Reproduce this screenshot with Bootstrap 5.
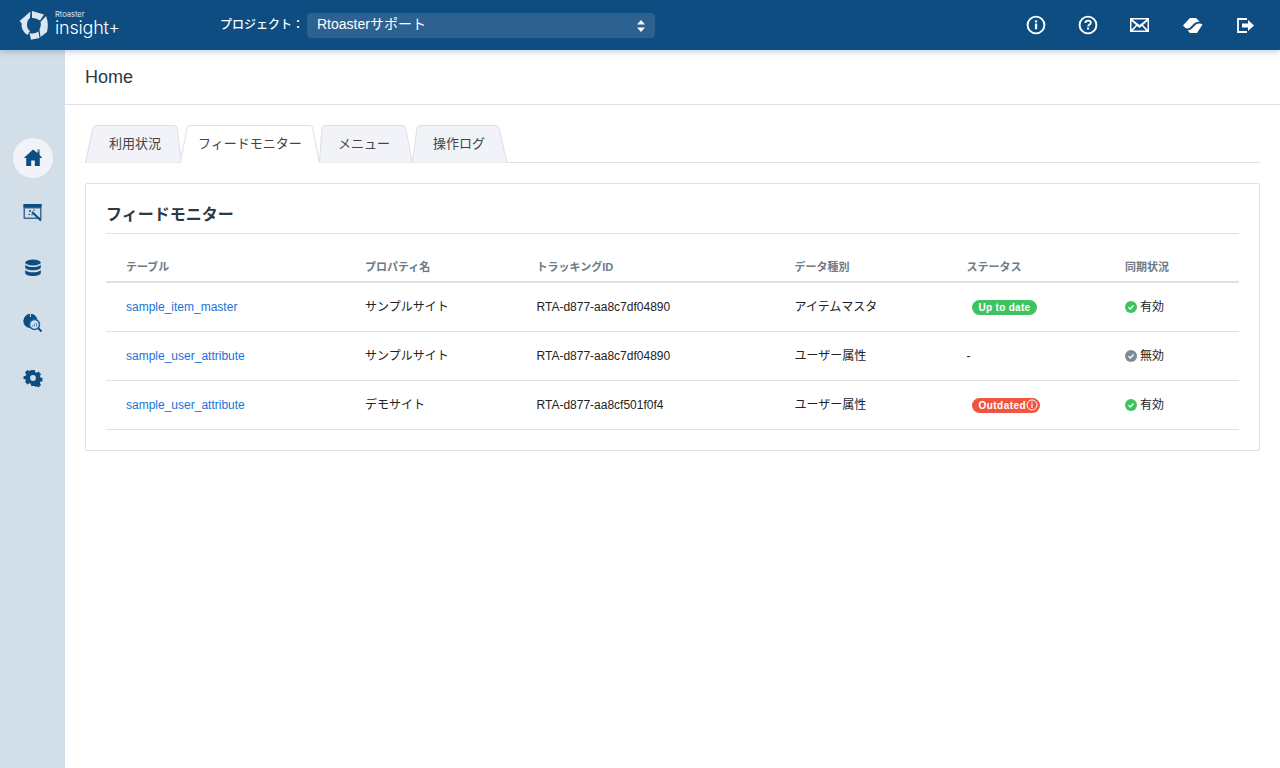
<!DOCTYPE html>
<html lang="ja">
<head>
<meta charset="utf-8">
<title>Home</title>
<link href="https://cdn.jsdelivr.net/npm/bootstrap@5.3.0/dist/css/bootstrap.min.css" rel="stylesheet">
<style>
html,body{height:100%}
body{font-family:"Liberation Sans","Noto Sans CJK JP",sans-serif;color:#222;background:#fff;overflow:hidden;font-size:12px}
.app-top{height:50px;background:#0e4d82;box-shadow:0 2px 6px rgba(14,77,130,.25);position:relative;z-index:5;padding:0}
.brand-box{width:220px;padding-left:19px;gap:6px;color:#fff;flex:none}
.brand-words{padding-bottom:4px}
.brand-small{font-family:"Inter",sans-serif;font-size:7.5px;line-height:8px;display:block;color:#dfe8f0}
.brand-big{font-family:"Inter",sans-serif;font-weight:300;font-size:18px;line-height:14px;letter-spacing:-.2px;display:block;color:#fff;margin-top:2px}
.proj-label{font-size:12px;font-weight:500;color:#fff;width:82px;letter-spacing:0;white-space:nowrap;margin-right:5px;flex:none}
.proj-select{width:348px;height:25px;background:#2c6190;border-radius:4px;color:#fff;font-size:14px;padding:0 10px 2px;position:relative;flex:none}
.proj-arrows{position:absolute;right:9px;top:7px}
.top-icons{margin-left:auto;gap:30px;padding-right:24px}
.top-icons a{display:block;width:22px;height:22px;color:#fff}
.side-rail{width:65px;background:#d2dee8;padding-top:88px;gap:15px;flex:none}
.rail-btn{width:40px;height:40px;border-radius:50%;color:#0e4d82}
.rail-on{background:#f1f3f8}
.page-main{flex:1;min-width:0}
.home-head{height:55px;padding:0 20px;border-bottom:1px solid #dfe1e4;font-size:18px;color:#2b3a44}
.work-area{padding:20px 20px 0}
.tab-row{height:38px;border-bottom:1px solid #dee0e3;margin:0;padding:0;list-style:none}
.tab-item{position:relative;height:38px;font-size:13px;color:#444;display:flex;align-items:center;white-space:nowrap;padding-bottom:1px}
.tab-item svg{position:absolute;left:0;top:0;overflow:visible}
.tab-item span{position:relative}
.tab-a{width:96px;padding-left:24px}
.tab-b{width:138px;padding-left:17px;z-index:2}
.tab-c{width:93px;padding-left:19px}
.tab-d{width:95px;padding-left:21px}
.feed-card{margin-top:20px;border:1px solid #dfe1e4;border-radius:2px;padding:20px 20px 20px;height:268px}
.feed-title{font-size:16px;font-weight:700;color:#2b3a44;height:30px;margin:0;line-height:21px;border-bottom:1px solid #dfe1e4}
.feed-table{table-layout:fixed;width:100%;margin:0;font-size:12px;--bs-table-color:#222}
.feed-table th{font-size:11px;font-weight:700;color:#6e7a84;height:48px;padding:0 0 6px 20px;vertical-align:bottom;border-bottom:2px solid #dfe1e4;line-height:16px}
.feed-table td{height:49px;padding:0 0 0 20px;vertical-align:middle;border-bottom:1px solid #dfe1e4;color:#222;line-height:16px}
.feed-table a{color:#1a73d9;text-decoration:none}
.state-pill{display:inline-flex;align-items:center;height:15px;border-radius:8px;font-size:10px;font-weight:700;color:#fff;padding:0 7px;margin-left:5px;line-height:15px;letter-spacing:.3px}
.pill-ok{background:#3fc35f}
.pill-old{background:#f0563f;padding-right:2px;letter-spacing:.45px}
.sync-cell{display:flex;align-items:center;gap:3px}
</style>
</head>
<body>
<nav class="navbar app-top d-flex flex-nowrap justify-content-start align-items-center">
  <div class="brand-box d-flex align-items-center">
    <svg width="30" height="30" viewBox="0 0 30 30" aria-hidden="true"><g fill="#dbe6f0"><path d="M.5 11 11.500 1.500 11 8Q8 10 8 14.500 8 19 11 21L8.500 25Q2 21 2.500 13z"/><path d="M13 1 25 4.500 21 10.500Q17 7.500 13 8z"/><path d="M27 6Q30 13 28 22L21.500 27 20.500 19.500Q22.500 15 21.500 12z"/><path d="M10.500 23Q15 24.500 19.500 21.500L20.500 28 12 29.800z"/></g></svg>
    <div class="brand-words"><span class="brand-small">Rtoaster</span><span class="brand-big">insight+</span></div>
  </div>
  <div class="proj-label">プロジェクト：</div>
  <div class="proj-select d-flex align-items-center">Rtoasterサポート
    <svg class="proj-arrows" width="10" height="12" viewBox="0 0 10 12"><path d="M5 0l4 4.500H1zM5 12l4-4.500H1z" fill="#fff"/></svg>
  </div>
  <div class="top-icons d-flex align-items-center">
    <a href="#" aria-label="info"><svg width="22" height="22" viewBox="0 0 22 22"><circle cx="10" cy="11" r="8.400" fill="none" stroke="#fff" stroke-width="1.900"/><rect x="8.900" y="9.600" width="2.300" height="5.600" fill="#fff"/><rect x="8.900" y="6.400" width="2.300" height="2.100" fill="#fff"/></svg></a>
    <a href="#" aria-label="help"><svg width="22" height="22" viewBox="0 0 22 22"><circle cx="10" cy="11" r="8.400" fill="none" stroke="#fff" stroke-width="1.900"/><path d="M7.300 9c.1-1.600 1.200-2.400 2.800-2.400 1.600 0 2.700.9 2.700 2.200 0 2-2.600 1.900-2.700 3.600" fill="none" stroke="#fff" stroke-width="1.800"/><rect x="9" y="13.500" width="2.100" height="2" fill="#fff"/></svg></a>
    <a href="#" aria-label="mail"><svg width="22" height="22" viewBox="0 0 22 22"><rect x="0" y="4" width="19" height="14" fill="#fff"/><path d="M2.500 5.500H16.500L9.500 11zM1.500 7 6 11 1.500 15.500zM17.500 7 13 11 17.500 15.500zM3 16.500 7 12 9.500 14 12 12 16 16.500z" fill="#0e4d82"/></svg></a>
    <a href="#" aria-label="transfer"><svg width="22" height="22" viewBox="0 0 22 22"><path d="M1 11.500 8 4H14L20.500 10.500 15 19H8z" fill="#fff"/><path d="M21.500 9.500Q16.500 7.500 13 10L8.500 14.500Q6 16.500 1.500 14" fill="none" stroke="#0e4d82" stroke-width="2"/></svg></a>
    <a href="#" aria-label="logout"><svg width="22" height="22" viewBox="0 0 22 22"><path d="M13 5H4v13h9" fill="none" stroke="#fff" stroke-width="1.800"/><path d="M8 9.500h6V6l6 5.500-6 5.500v-3.500H8z" fill="#fff"/></svg></a>
  </div>
</nav>
<div class="d-flex" style="height:718px">
  <aside class="side-rail d-flex flex-column align-items-center">
    <a href="#" class="rail-btn rail-on d-flex align-items-center justify-content-center" aria-label="home"><svg width="20" height="20" viewBox="0 0 20 20"><path d="M10 1.500.8 10h2.400v8h5v-5.500h3.600V18h5v-8h2.400L16.500 6.800V3h-2v2z" fill="#0e4d82"/><circle cx="15.500" cy="2.500" r="1.400" fill="#6f9cc4"/></svg></a>
    <a href="#" class="rail-btn d-flex align-items-center justify-content-center" aria-label="tag"><svg width="20" height="20" viewBox="0 0 20 20"><rect x="0.500" y="1" width="18" height="15" fill="#3f6c97"/><rect x="0.500" y="1" width="18" height="3.500" fill="#0e4d82"/><rect x="2" y="5.500" width="15" height="9" fill="#d2dee8"/><path d="M9 9l9 8.500" stroke="#0e4d82" stroke-width="2"/><path d="M6 8h2M7 7v2M11 6.500v1.500M5.500 11.500h1.500M9 11v1.500" stroke="#0e4d82" stroke-width="1"/></svg></a>
    <a href="#" class="rail-btn d-flex align-items-center justify-content-center" aria-label="data"><svg width="18" height="20" viewBox="0 0 18 20"><g fill="#0e4d82"><ellipse cx="9" cy="4.500" rx="7.800" ry="3"/><path d="M1.200 6.800v2.500C1.200 11 4.700 12.300 9 12.300s7.800-1.300 7.800-3V6.800C15.500 8.300 12.500 9.100 9 9.100S2.500 8.300 1.200 6.800z"/><path d="M1.200 12v3c0 1.700 3.500 3 7.800 3s7.800-1.300 7.800-3v-3c-1.300 1.500-4.300 2.300-7.800 2.300S2.500 13.500 1.200 12z"/></g></svg></a>
    <a href="#" class="rail-btn d-flex align-items-center justify-content-center" aria-label="analysis"><svg width="20" height="20" viewBox="0 0 20 20"><circle cx="7.500" cy="8" r="7.200" fill="#0e4d82"/><path d="M7.500.8V4" stroke="#d2dee8" stroke-width="1"/><circle cx="11.500" cy="11.500" r="5" fill="#d2dee8" stroke="#1b62a8" stroke-width="1.500"/><path d="M15 15l3.500 3.500" stroke="#0e4d82" stroke-width="2"/><path d="M9.500 13.500v-1.500M11.500 13.500v-3M13.500 13.500V10" stroke="#5f8ab2" stroke-width="1"/></svg></a>
    <a href="#" class="rail-btn d-flex align-items-center justify-content-center" aria-label="settings"><svg width="20" height="20" viewBox="0 0 20 20"><path fill="#0e4d82" fill-rule="evenodd" d="M8 1h4l.5 2.500 1.500.7 2.200-1.300 2.700 2.800-1.300 2.100.7 1.600 2.200.6v3.500l-2.300.6-.6 1.500 1.300 2.200-2.800 2.700-2.100-1.300-1.600.7L12 19H8l-.5-2.500-1.500-.7-2.200 1.300-2.700-2.800 1.300-2.100L1.700 11.600-.5 11V8l2.300-.6.600-1.500L1.100 3.700 3.900 1l2.100 1.300L7.500 1.600zM10 6.800a3.200 3.200 0 1 0 0 6.400 3.200 3.200 0 0 0 0-6.400z" transform="translate(1 1) scale(.9)"/></svg></a>
  </aside>
  <main class="page-main">
    <div class="home-head d-flex align-items-center">Home</div>
    <div class="work-area">
      <ul class="tab-row d-flex">
        <li class="tab-item tab-a"><svg width="96" height="38"><path d="M.5 37.500 8 3Q8.500.5 11 .5H89Q91.500.5 92 3L96.500 37.500" fill="#f1f3f8" stroke="#dcdfe4"/></svg><span>利用状況</span></li>
        <li class="tab-item tab-b"><svg width="138" height="38"><path d="M-.5 37.500 6 3Q6.500.5 9 .5H129Q131 .5 131.500 3L138.500 38" fill="#fff" stroke="#dcdfe4"/><path d="M0 38H138" stroke="#fff" stroke-width="2"/></svg><span>フィードモニター</span></li>
        <li class="tab-item tab-c"><svg width="93" height="38"><path d="M.5 37.500 3 3Q3.500.5 6 .5H84Q86 .5 86.500 3L93.500 37.500" fill="#f1f3f8" stroke="#dcdfe4"/></svg><span>メニュー</span></li>
        <li class="tab-item tab-d"><svg width="95" height="38"><path d="M.5 37.500 5 3Q5.500.5 8 .5H84Q86.500.5 87 3L95 37.500" fill="#f1f3f8" stroke="#dcdfe4"/></svg><span>操作ログ</span></li>
      </ul>
      <section class="feed-card">
        <h2 class="feed-title">フィードモニター</h2>
        <table class="table feed-table">
          <colgroup><col style="width:239px"><col style="width:171.5px"><col style="width:258px"><col style="width:172px"><col style="width:158.5px"><col></colgroup>
          <thead><tr><th>テーブル</th><th>プロパティ名</th><th>トラッキングID</th><th>データ種別</th><th>ステータス</th><th>同期状況</th></tr></thead>
          <tbody>
            <tr><td><a href="#">sample_item_master</a></td><td>サンプルサイト</td><td>RTA-d877-aa8c7df04890</td><td>アイテムマスタ</td><td><span class="state-pill pill-ok">Up to date</span></td><td><div class="sync-cell"><svg width="12" height="12" viewBox="0 0 12 12"><circle cx="6" cy="6" r="6" fill="#3fc35f"/><path d="M3.500 6.200 5.300 8 8.500 4.500" fill="none" stroke="#fff" stroke-width="1.300"/></svg>有効</div></td></tr>
            <tr><td><a href="#">sample_user_attribute</a></td><td>サンプルサイト</td><td>RTA-d877-aa8c7df04890</td><td>ユーザー属性</td><td>-</td><td><div class="sync-cell"><svg width="12" height="12" viewBox="0 0 12 12"><circle cx="6" cy="6" r="6" fill="#7d8b99"/><path d="M3.500 6.200 5.300 8 8.500 4.500" fill="none" stroke="#fff" stroke-width="1.300"/></svg>無効</div></td></tr>
            <tr><td><a href="#">sample_user_attribute</a></td><td>デモサイト</td><td>RTA-d877-aa8cf501f0f4</td><td>ユーザー属性</td><td><span class="state-pill pill-old">Outdated<svg width="12" height="12" viewBox="0 0 12 12"><circle cx="6" cy="6" r="5" fill="none" stroke="#fff"/><rect x="5.400" y="5" width="1.200" height="4" fill="#fff"/><rect x="5.400" y="3" width="1.200" height="1.200" fill="#fff"/></svg></span></td><td><div class="sync-cell"><svg width="12" height="12" viewBox="0 0 12 12"><circle cx="6" cy="6" r="6" fill="#3fc35f"/><path d="M3.500 6.200 5.300 8 8.500 4.500" fill="none" stroke="#fff" stroke-width="1.300"/></svg>有効</div></td></tr>
          </tbody>
        </table>
      </section>
    </div>
  </main>
</div>
<script src="https://cdn.jsdelivr.net/npm/bootstrap@5.3.0/dist/js/bootstrap.bundle.min.js"></script>
</body>
</html>
